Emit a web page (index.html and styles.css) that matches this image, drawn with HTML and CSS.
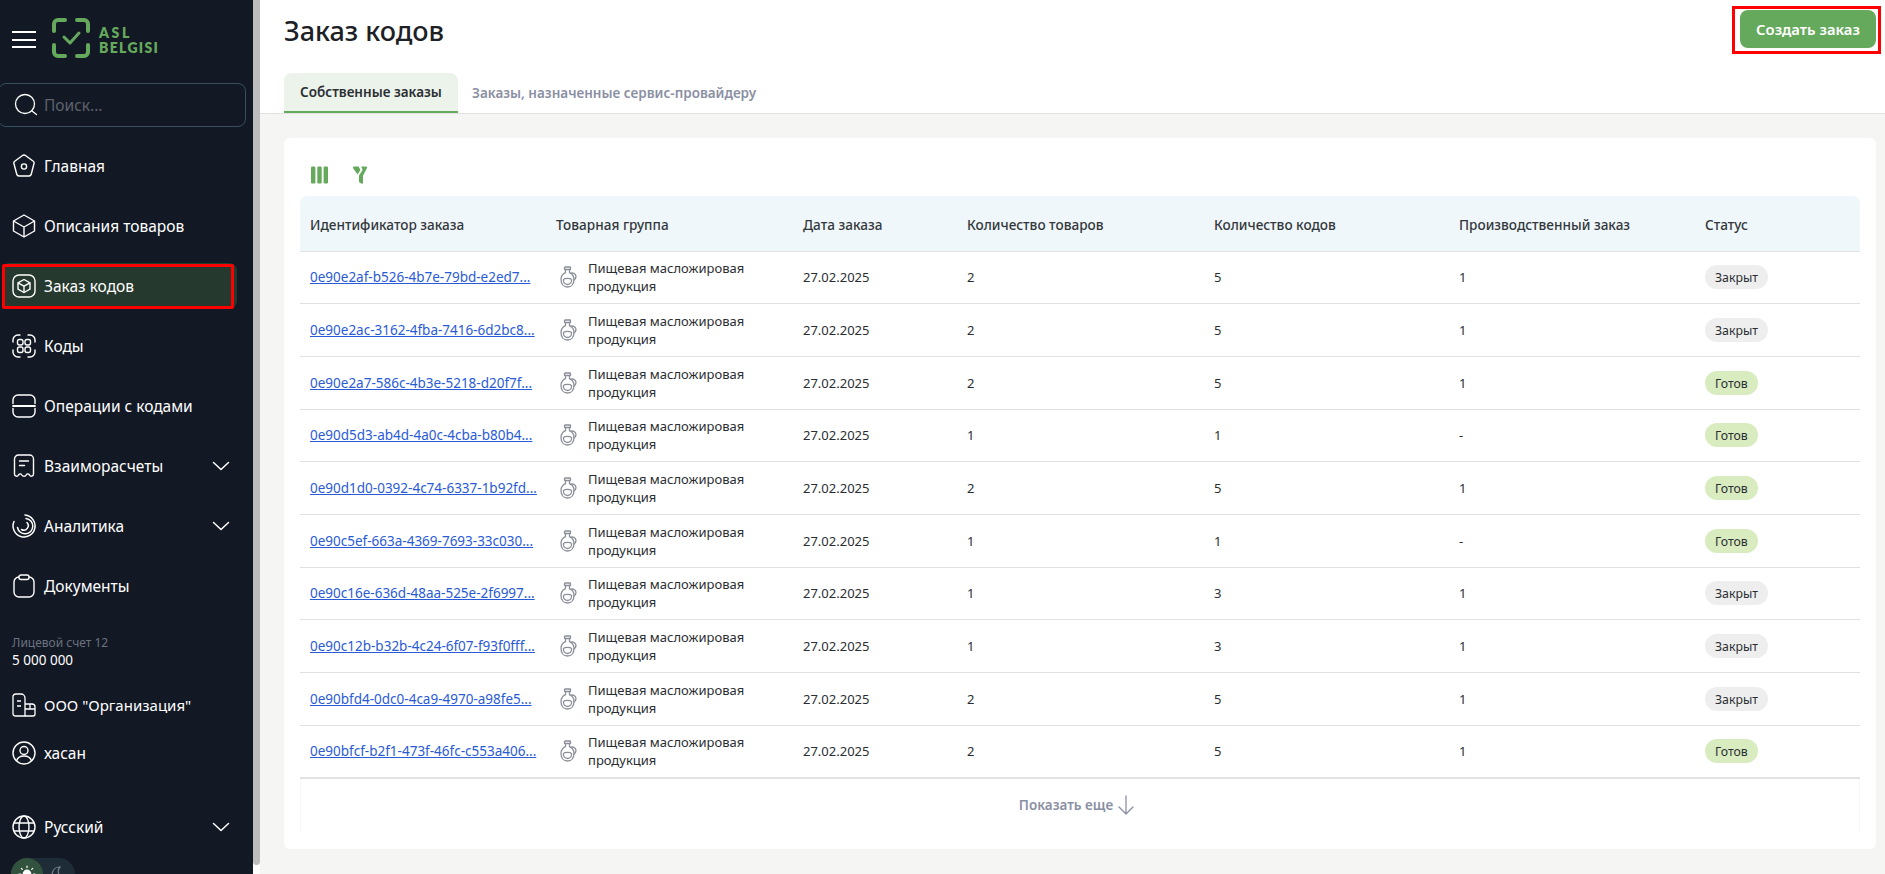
FILE: index.html
```html
<!DOCTYPE html>
<html lang="ru">
<head>
<meta charset="utf-8">
<title>Заказ кодов</title>
<link rel="stylesheet" href="styles.css">
</head>
<body>
<svg class="defs" aria-hidden="true"><symbol id="flask" viewBox="0 0 17 22"><g fill="none" stroke="#8a8f98" stroke-width="1.300" stroke-linejoin="round" stroke-linecap="round"><rect x="4.500" y="1" width="6" height="2.500" rx=".6"/><path d="M5.500 3.500v3.200C2.500 8 1 10.500 1 13.500 1 18 3.500 21 7.500 21s6.500-3 6.500-7.500c0-3-1.500-5.500-4.500-6.800V3.500"/><path d="M10.500 7.500c1.500-1 5.500-.5 5.500 3 0 2-1 3-2.200 3.500"/><path d="M3.500 13.500c1-1.500 7-1.500 8 0 .5 2.500-1 5-4 5s-4.500-2.500-4-5z"/></g></symbol></svg>
<div class="app">
  <aside class="sidebar">
    <div class="brand">
      <button class="burger" aria-label="Меню"><span></span><span></span><span></span></button>
      <svg class="logo-mark" viewBox="0 0 40 40" fill="none" stroke="#65a95c" stroke-width="4" stroke-linecap="round" stroke-linejoin="round"><path d="M3 13V6a4 4 0 0 1 4-4h7M26 2h7a4 4 0 0 1 4 4v7M37 27v7a4 4 0 0 1-4 4h-7M14 38H7a4 4 0 0 1-4-4v-7"/><path d="M13 19l6 6 9-10" stroke-width="3"/></svg>
      <div class="logo-text"><span class="logo-top">ASL</span><span>BELGISI</span></div>
    </div>
    <label class="search">
      <svg class="ico search-ico" viewBox="0 0 24 24" fill="none" stroke="#fff" stroke-width="1.3" stroke-linecap="round"><circle cx="11" cy="11" r="9.5"/><path d="M18 18l4.5 3.5"/></svg>
      <span class="search-ph">Поиск...</span>
    </label>
    <nav class="nav">
      <a class="item"><svg class="ico" viewBox="0 0 24 24" fill="none" stroke="#fff" stroke-width="1.4" stroke-linejoin="round"><path d="M10.2 1.7a3 3 0 0 1 3.6 0l7.5 5.6a2 2 0 0 1 .7 2.2L19.300 20a2.500 2.500 0 0 1-2.400 2H7.100a2.500 2.500 0 0 1-2.400-2L1.900 9.500a2 2 0 0 1 .8-2.200z"/><circle cx="12" cy="12.500" r="2.600"/></svg><span>Главная</span></a>
      <a class="item"><svg class="ico" viewBox="0 0 24 24" fill="none" stroke="#fff" stroke-width="1.4" stroke-linejoin="round"><path d="M12 1l10.500 6v10L12 23 1.500 17V7z"/><path d="M1.500 7L12 13l10.500-6M12 13v10"/></svg><span>Описания товаров</span></a>
      <a class="item active"><svg class="ico" viewBox="0 0 24 24" fill="none" stroke="#fff" stroke-width="1.400" stroke-linejoin="round"><rect x="1" y="1" width="22" height="22" rx="6"/><path d="M12 5.500l6 3.300v6.400l-6 3.300-6-3.300V8.800z"/><path d="M6 8.800l6 3.300 6-3.300M12 12.100v6.400"/></svg><span>Заказ кодов</span></a>
      <a class="item"><svg class="ico" viewBox="0 0 24 24" fill="none" stroke="#fff" stroke-width="1.400" stroke-linecap="round"><rect x="5.500" y="5.500" width="5.500" height="5.500" rx="2"/><rect x="13" y="5.500" width="5.500" height="5.500" rx="2"/><rect x="5.500" y="13" width="5.500" height="5.500" rx="2"/><rect x="13" y="13" width="5.500" height="5.500" rx="2"/><path d="M1 8V6a5 5 0 0 1 5-5h2M16 1h2a5 5 0 0 1 5 5v2M23 16v2a5 5 0 0 1-5 5h-2M8 23H6a5 5 0 0 1-5-5v-2"/></svg><span>Коды</span></a>
      <a class="item"><svg class="ico" viewBox="0 0 24 24" fill="none" stroke="#fff" stroke-width="1.400" stroke-linecap="round"><path d="M1 9.500V6a5 5 0 0 1 5-5h12a5 5 0 0 1 5 5v3.500M1 14.500V18a5 5 0 0 0 5 5h12a5 5 0 0 0 5-5v-3.500"/><path d="M1 12h22" stroke-width="1.800"/></svg><span>Операции с кодами</span></a>
      <a class="item"><svg class="ico" viewBox="0 0 24 24" fill="none" stroke="#fff" stroke-width="1.400" stroke-linecap="round" stroke-linejoin="round"><path d="M2.500 20V5a4 4 0 0 1 4-4h11a4 4 0 0 1 4 4v15c0 2.500-3 3-4 1-1-1.500-2.500-1.500-3.300 0-.8 1.700-3.400 1.700-4.400 0-.8-1.500-2.300-1.500-3.300 0-1 2-4 1.500-4-1z"/><path d="M7.500 7h9M7.500 11.500h5"/></svg><span>Взаиморасчеты</span><svg class="chev" viewBox="0 0 18 12" fill="none" stroke="#fff" stroke-width="1.500" stroke-linecap="round" stroke-linejoin="round"><path d="M1.500 2.500L9 9.500l7.500-7"/></svg></a>
      <a class="item"><svg class="ico" viewBox="0 0 24 24" fill="none" stroke="#fff" stroke-width="1.500" stroke-linecap="round"><path d="M13 1a11 11 0 1 1-11 6.500"/><path d="M14 4.500a7.700 7.700 0 1 1-8.500 9"/><path d="M15 8.500a4.500 4.500 0 0 1-5.500 7"/></svg><span>Аналитика</span><svg class="chev" viewBox="0 0 18 12" fill="none" stroke="#fff" stroke-width="1.500" stroke-linecap="round" stroke-linejoin="round"><path d="M1.500 2.500L9 9.500l7.500-7"/></svg></a>
      <a class="item"><svg class="ico" viewBox="0 0 24 24" fill="none" stroke="#fff" stroke-width="1.400" stroke-linejoin="round"><rect x="2" y="3" width="20" height="20" rx="5"/><rect x="7" y="1" width="10" height="4.500" rx="2" fill="#121824"/></svg><span>Документы</span></a>
    </nav>
    <div class="balance">
      <div class="balance-label">Лицевой счет 12</div>
      <div class="balance-value">5 000 000</div>
    </div>
    <a class="item slim org"><svg class="ico" viewBox="0 0 24 24" fill="none" stroke="#fff" stroke-width="1.300" stroke-linejoin="round"><path d="M13 23H3.500A2.500 2.500 0 0 1 1 20.500V4a3 3 0 0 1 3-3h5a4 4 0 0 1 4 4z"/><path d="M5 8h4M5 13h4"/><path d="M13 11h7a3 3 0 0 1 3 3v7a2 2 0 0 1-2 2h-8M13 16h10M18 11v5"/></svg><span>ООО "Организация"</span></a>
    <a class="item slim user"><svg class="ico" viewBox="0 0 24 24" fill="none" stroke="#fff" stroke-width="1.400"><circle cx="12" cy="12" r="11"/><circle cx="12" cy="9.500" r="4"/><path d="M4.500 20c1-3.500 4-5 7.500-5s6.500 1.500 7.500 5"/></svg><span>хасан</span></a>
    <a class="item lang"><svg class="ico" viewBox="0 0 24 24" fill="none" stroke="#fff" stroke-width="1.400"><circle cx="12" cy="12" r="11"/><ellipse cx="12" cy="12" rx="5" ry="11"/><path d="M2 8h20M2 16h20"/></svg><span>Русский</span><svg class="chev" viewBox="0 0 18 12" fill="none" stroke="#fff" stroke-width="1.500" stroke-linecap="round" stroke-linejoin="round"><path d="M1.500 2.500L9 9.500l7.500-7"/></svg></a>
    <div class="theme">
      <span class="theme-btn on"><svg viewBox="0 0 18 18" fill="#fff" stroke="#fff" stroke-width="1.200" stroke-linecap="round"><circle cx="9" cy="9" r="3.800"/><path d="M9 1v1.500M3.300 3.300l1 1M14.700 3.300l-1 1M1 9h1.500M15.500 9H17"/></svg></span>
      <span class="theme-btn"><svg viewBox="0 0 18 18" fill="none" stroke="#77808c" stroke-width="1.200"><path d="M10 2a7.500 7.500 0 1 0 6 11.500A7 7 0 0 1 10 2z"/></svg></span>
    </div>
  </aside>
  <div class="scrollbar"></div>
  <main class="main">
    <header class="head">
      <div class="head-row">
        <h1>Заказ кодов</h1>
        <button class="create">Создать заказ</button>
      </div>
      <div class="tabs">
        <a class="tab current">Собственные заказы</a>
        <a class="tab">Заказы, назначенные сервис-провайдеру</a>
      </div>
    </header>
    <section class="content">
      <div class="card">
        <div class="tools">
          <svg class="tool-cols" viewBox="0 0 17 18" fill="#65a95c"><rect x="0" y="0.500" width="4.400" height="17" rx="1.200"/><rect x="6.300" y="0.500" width="4.400" height="17" rx="1.200"/><rect x="12.600" y="0.500" width="4.400" height="17" rx="1.200"/></svg>
          <svg class="tool-filter" viewBox="0 0 14 18" fill="#65a95c"><path d="M1 .5h4.600L7.400 4 4.600 8.400.3 2.600C-.2 1.700.2.500 1 .5z"/><path d="M8.200.5h4.900c1 0 1.300 1 .8 1.800L10 9.800v6.700c0 1.100-1 1.500-1.800 1L6 16V9.400L9.600 4z"/></svg>
        </div>
        <table class="grid">
          <thead>
            <tr>
              <th class="c1">Идентификатор заказа</th>
              <th class="c2">Товарная группа</th>
              <th class="c3">Дата заказа</th>
              <th class="c4">Количество товаров</th>
              <th class="c5">Количество кодов</th>
              <th class="c6">Производственный заказ</th>
              <th class="c7">Статус</th>
            </tr>
          </thead>
          <tbody>
            <tr><td><a class="id">0e90e2af-b526-4b7e-79bd-e2ed7...</a></td><td><div class="group"><svg><use href="#flask"/></svg><span>Пищевая масложировая<br>продукция</span></div></td><td>27.02.2025</td><td>2</td><td>5</td><td>1</td><td><span class="pill closed">Закрыт</span></td></tr>
            <tr><td><a class="id">0e90e2ac-3162-4fba-7416-6d2bc8...</a></td><td><div class="group"><svg><use href="#flask"/></svg><span>Пищевая масложировая<br>продукция</span></div></td><td>27.02.2025</td><td>2</td><td>5</td><td>1</td><td><span class="pill closed">Закрыт</span></td></tr>
            <tr><td><a class="id">0e90e2a7-586c-4b3e-5218-d20f7f...</a></td><td><div class="group"><svg><use href="#flask"/></svg><span>Пищевая масложировая<br>продукция</span></div></td><td>27.02.2025</td><td>2</td><td>5</td><td>1</td><td><span class="pill ready">Готов</span></td></tr>
            <tr><td><a class="id">0e90d5d3-ab4d-4a0c-4cba-b80b4...</a></td><td><div class="group"><svg><use href="#flask"/></svg><span>Пищевая масложировая<br>продукция</span></div></td><td>27.02.2025</td><td>1</td><td>1</td><td>-</td><td><span class="pill ready">Готов</span></td></tr>
            <tr><td><a class="id">0e90d1d0-0392-4c74-6337-1b92fd...</a></td><td><div class="group"><svg><use href="#flask"/></svg><span>Пищевая масложировая<br>продукция</span></div></td><td>27.02.2025</td><td>2</td><td>5</td><td>1</td><td><span class="pill ready">Готов</span></td></tr>
            <tr><td><a class="id">0e90c5ef-663a-4369-7693-33c030...</a></td><td><div class="group"><svg><use href="#flask"/></svg><span>Пищевая масложировая<br>продукция</span></div></td><td>27.02.2025</td><td>1</td><td>1</td><td>-</td><td><span class="pill ready">Готов</span></td></tr>
            <tr><td><a class="id">0e90c16e-636d-48aa-525e-2f6997...</a></td><td><div class="group"><svg><use href="#flask"/></svg><span>Пищевая масложировая<br>продукция</span></div></td><td>27.02.2025</td><td>1</td><td>3</td><td>1</td><td><span class="pill closed">Закрыт</span></td></tr>
            <tr><td><a class="id">0e90c12b-b32b-4c24-6f07-f93f0fff...</a></td><td><div class="group"><svg><use href="#flask"/></svg><span>Пищевая масложировая<br>продукция</span></div></td><td>27.02.2025</td><td>1</td><td>3</td><td>1</td><td><span class="pill closed">Закрыт</span></td></tr>
            <tr><td><a class="id">0e90bfd4-0dc0-4ca9-4970-a98fe5...</a></td><td><div class="group"><svg><use href="#flask"/></svg><span>Пищевая масложировая<br>продукция</span></div></td><td>27.02.2025</td><td>2</td><td>5</td><td>1</td><td><span class="pill closed">Закрыт</span></td></tr>
            <tr><td><a class="id">0e90bfcf-b2f1-473f-46fc-c553a406...</a></td><td><div class="group"><svg><use href="#flask"/></svg><span>Пищевая масложировая<br>продукция</span></div></td><td>27.02.2025</td><td>2</td><td>5</td><td>1</td><td><span class="pill ready">Готов</span></td></tr>
          </tbody>
        </table>
        <div class="more">
          <span>Показать еще</span>
          <svg viewBox="0 0 18 20" fill="none" stroke="#8a8fa3" stroke-width="1.300" stroke-linecap="round" stroke-linejoin="round"><path d="M9 1v18M2 12l7 7 7-7"/></svg>
        </div>
      </div>
    </section>
  </main>
  <div class="mark mark-nav"></div>
  <div class="mark mark-btn"></div>
</div>
</body>
</html>
```
FILE: styles.css
```css
* { box-sizing: border-box; }
html, body { margin: 0; height: 100%; }
body { font-family: "Noto Sans", "Open Sans", sans-serif; color: #1f2328; overflow: hidden; background: #fff; }
.defs { display: none; }
.app { display: flex; height: 874px; position: relative; overflow: hidden; }

.sidebar { width: 253px; flex: none; background: #121824; color: #fff; display: flex; flex-direction: column; overflow: hidden; }
.brand { height: 83px; flex: none; display: flex; align-items: flex-start; padding: 18px 0 0 12px; }
.burger { width: 24px; height: 17px; margin-top: 13px; padding: 0; border: 0; background: none; display: flex; flex-direction: column; justify-content: space-between; }
.burger span { display: block; height: 2px; background: #fff; }
.logo-mark { width: 40px; height: 40px; margin-left: 15px; }
.logo-text { margin-left: 8px; margin-top: 7px; color: #65a95c; font: 800 14px/15px Lato, sans-serif; letter-spacing: 1.300px; display: flex; flex-direction: column; }
.logo-top { letter-spacing: 2.600px; }

.search { height: 44px; flex: none; width: 248px; margin-left: -2px; border: 1px solid #35505f; border-radius: 8px; display: flex; align-items: center; padding-left: 15px; }
.search-ico { width: 22px; height: 22px; }
.search-ph { margin-left: 6px; color: #5d626c; font-size: 15.500px; }

.nav { margin-top: 9px; display: flex; flex-direction: column; flex: none; }
.item { height: 60px; flex: none; display: flex; align-items: center; padding-left: 12px; color: #fff; font-size: 15.500px; position: relative; }
.ico { width: 24px; height: 24px; flex: none; }
.item > span { margin-left: 8px; white-space: nowrap; }
.chev { position: absolute; left: 212px; top: 24px; width: 18px; height: 12px; }
.item.active { height: 46px; margin: 7px 16px 7px 2px; padding-left: 10px; background: #26392e; border-radius: 8px; }

.balance { margin-top: 18px; padding-left: 12px; flex: none; }
.balance-label { font-size: 12px; line-height: 17px; color: #6b7280; }
.balance-value { font-size: 13.500px; line-height: 18px; color: #fff; }
.slim { height: 48px; }
.org { margin-top: 12px; font-size: 15px; }
.lang { margin-top: 20px; height: 60px; }
.theme { width: 64px; height: 32px; flex: none; margin: 1px 0 0 11px; background: #1e2c38; border-radius: 16px; display: flex; }
.theme-btn { width: 32px; height: 32px; border-radius: 16px; display: flex; align-items: center; justify-content: center; }
.theme-btn svg { width: 18px; height: 18px; }
.theme-btn.on { background: #31523c; }

.scrollbar { width: 7px; height: 865px; flex: none; background: #bdbdbd; border-radius: 0 0 4px 4px; }

.main { flex: 1; min-width: 0; background: #f5f5f3; display: flex; flex-direction: column; }
.head { background: #fff; height: 114px; flex: none; border-bottom: 1px solid #e2e2e2; padding: 0 9px 0 24px; display: flex; flex-direction: column; }
.head-row { display: flex; justify-content: space-between; align-items: flex-start; height: 73px; }
h1 { margin: 12px 0 0; font-size: 27px; line-height: 38px; font-weight: 500; color: #1d2126; }
.create { margin-top: 10px; width: 136px; height: 38px; border: 0; border-radius: 8px; background: #65a95c; color: #fff; font: 600 14.800px "Noto Sans", sans-serif; }
.tabs { display: flex; height: 40px; }
.tab { padding: 0 14px; font-size: 13.500px; font-weight: 600; color: #8a8fa3; display: flex; align-items: center; }
.tab.current { width: 174px; padding: 0 16px; white-space: nowrap; background: #ecf3ea; color: #2a2e33; border-radius: 8px 8px 0 0; border-bottom: 2px solid #65a95c; }

.content { flex: 1; padding: 24px 9px 25px 24px; min-height: 0; }
.card { background: #fff; border-radius: 6px; height: 711px; padding: 0 16px; }
.tools { height: 58px; display: flex; align-items: flex-start; gap: 25px; padding: 28px 0 0 11px; }
.tool-cols { width: 17px; height: 18px; }
.tool-filter { width: 14px; height: 18px; }

.grid { width: 1560px; table-layout: fixed; border-collapse: collapse; font-size: 13px; }
.grid th { height: 55px; background: #f0f7fa; border-bottom: 1px solid #e2e2e2; padding: 2px 10px 0; text-align: left; font-weight: 500; font-size: 13.600px; color: #33373c; white-space: nowrap; }
.grid th.c1 { border-radius: 8px 0 0 0; }
.grid th.c7 { border-radius: 0 8px 0 0; }
.c1 { width: 246px; } .c2 { width: 247px; } .c3 { width: 164px; } .c4 { width: 247px; } .c5 { width: 245px; } .c6 { width: 246px; } .c7 { width: 165px; }
.grid td { height: 52.700px; border-bottom: 1px solid #e2e2e2; padding: 0 10px; color: #2a2e33; }
.grid tbody tr:last-child td { border-bottom-width: 2px; }
.id { display: block; color: #2a5bd7; text-decoration: underline; font-size: 13.500px; white-space: nowrap; }
.group { display: flex; align-items: center; gap: 11px; line-height: 18px; padding-left: 4px; }
.group svg { width: 17px; height: 22px; flex: none; }
.pill { display: inline-block; height: 24px; line-height: 25px; padding: 0 10px; border-radius: 12px; font-size: 12.300px; color: #2a2e33; }
.closed { background: #eeeeee; }
.ready { background: #d9ecc0; }

.more { height: 52px; border: solid #f6f6f6; border-width: 0 1px; display: flex; align-items: center; justify-content: center; gap: 4px; padding-right: 6px; color: #8a8fa3; font-size: 13.500px; font-weight: 600; }
.more svg { width: 18px; height: 20px; }

.mark { position: absolute; border: 3px solid #ff0000; pointer-events: none; }
.mark-nav { left: 2px; top: 264px; width: 232px; height: 45px; border-radius: 2px; }
.mark-btn { left: 1732px; top: 6px; width: 149px; height: 48px; }
```
